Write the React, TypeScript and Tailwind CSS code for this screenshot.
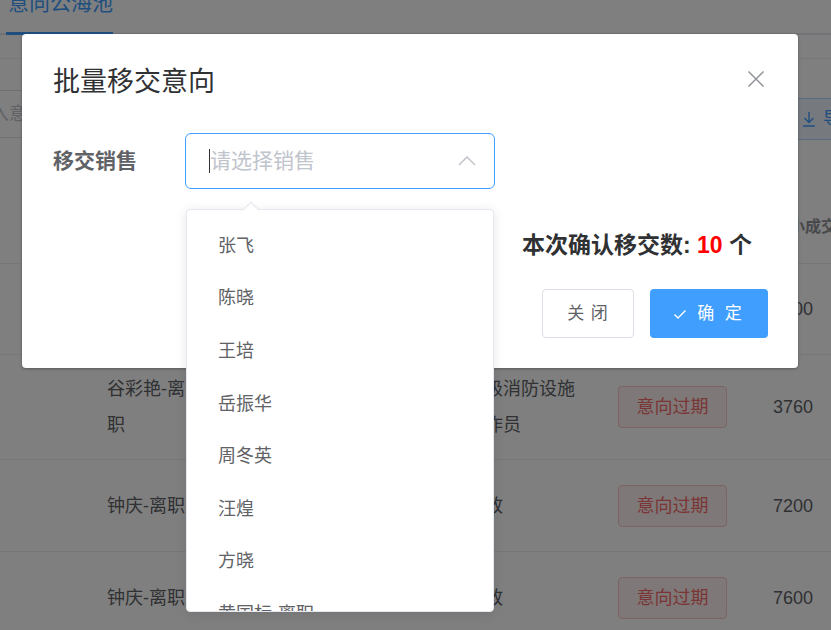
import React from "react";

const salesList = ["张飞", "陈晓", "王培", "岳振华", "周冬英", "汪煌", "方晓", "黄国标-离职"];

const rows = [
    { name: "", job: "", amount: "4800", h: "h-[91px]" },
    { name: "谷彩艳-离职", job: "初级消防设施操作员", amount: "3760", h: "h-[105px]" },
    { name: "钟庆-离职", job: "行政", amount: "7200", h: "h-[92px]" },
    { name: "钟庆-离职", job: "行政", amount: "7600", h: "h-[92px]" },
];

const BackgroundPage = () => (
    <div className="w-full">
        {/* tabs */}
        <div className="h-[35px] flex items-end border-b-2 border-[#e4e7ed] pl-[6px]">
            <div className="mb-[-2px] pl-[2px] pb-[14px] border-b-[3px] border-[#409eff] text-[21px] leading-[30px] text-[#409eff]">
                意向公海池
            </div>
        </div>
        <div className="h-[24px] border-b border-[#ebeef5]" />
        {/* toolbar */}
        <div className="h-[79px] flex items-start pt-[31px]">
            <div className="ml-[-60px] w-[300px] h-[48px] border border-[#dcdfe6] rounded-[4px] flex items-center pl-[14px] text-[18px] text-[#c0c4cc]">
                请输入意向客户
            </div>
            <div className="ml-auto mr-[-61px] mt-[8px] w-[110px] h-[42px] border border-[#b3d8ff] bg-[#ecf5ff] rounded-[4px] flex items-center gap-[7px] pl-[19px] text-[18px] text-[#409eff]">
                <svg width="14" height="16" viewBox="0 0 14 16" fill="none" stroke="currentColor" strokeWidth="1.4">
                    <path d="M7 1v10M2.5 7l4.5 4.5L11.5 7M1 15h12" />
                </svg>
                导出
            </div>
        </div>
        {/* table header */}
        <div className="h-[126px] border-b border-[#ebeef5] grid grid-cols-[773px_1fr] items-end pb-[24px]">
            <div />
            <div className="text-[16px] leading-[24px] text-[#909399] font-semibold whitespace-nowrap">最小成交价</div>
        </div>
        {rows.map((r, i) => (
            <div key={i} className={`${r.h} border-b border-[#ebeef5] grid grid-cols-[107px_360px_151px_155px_1fr] items-center text-[18px] leading-[36px] text-[#606266]`}>
                <div />
                <div className="w-[92px]">{r.name}</div>
                <div className="w-[115px]">{r.job}</div>
                <div>
                    <div className="w-[109px] h-[42px] border border-[#fbc4c4] bg-[#fef0f0] rounded-[4px] flex items-center justify-center text-[#f56c6c]">
                        意向过期
                    </div>
                </div>
                <div>{r.amount}</div>
            </div>
        ))}
    </div>
);

const TransferDialog = () => (
    <div className="absolute left-[22px] top-[34px] w-[776px] h-[334px] bg-white rounded-[4px] shadow-[0_1px_3px_rgba(0,0,0,0.3)] flex flex-col">
        <div className="h-[66px] pt-[30px] pl-[31px] pr-[32px] flex items-center justify-between">
            <div className="text-[27px] leading-[36px] text-[#303133]">批量移交意向</div>
            <svg className="mb-[6px]" width="20" height="20" viewBox="0 0 20 20" fill="none" stroke="#909399" strokeWidth="1.5">
                <path d="M2.5 2.5l15 15M17.5 2.5l-15 15" />
            </svg>
        </div>
        <div className="mt-[33px] pl-[31px] flex items-center">
            <div className="w-[132px] text-[21px] font-semibold text-[#606266]">移交销售</div>
            <div className="w-[310px] h-[56px] border border-[#409eff] rounded-[6px] flex items-center pl-[23px] pr-[18px]">
                <span className="w-[1px] h-[24px] bg-[#303133]" />
                <span className="text-[21px] text-[#c0c4cc]">请选择销售</span>
                <svg className="ml-auto" width="18" height="10" viewBox="0 0 18 10" fill="none" stroke="#c0c4cc" strokeWidth="1.5">
                    <path d="M1 9l8-8 8 8" />
                </svg>
            </div>
        </div>
        <div className="mt-[41px] pr-[46px] flex justify-end">
            <div className="text-[23px] leading-[30px] font-bold text-[#303133]">
                本次确认移交数: <span className="text-[#ff0000]">10</span> 个
            </div>
        </div>
        <div className="mt-[29px] pr-[30px] flex justify-end gap-[16px]">
            <button className="w-[92px] h-[49px] border border-[#dcdfe6] rounded-[4px] bg-white text-[17px] text-[#606266] tracking-[1px]">
                关 闭
            </button>
            <button className="w-[118px] h-[49px] rounded-[4px] bg-[#409eff] text-[17px] text-white flex items-center justify-center gap-[10px] tracking-[3px]">
                <svg width="14" height="14" viewBox="0 0 14 14" fill="none" stroke="white" strokeWidth="1.4">
                    <path d="M1.5 7.5L5 11l7.5-7.5" />
                </svg>
                确 定
            </button>
        </div>
    </div>
);

const SalesDropdown = () => (
    <div className="absolute left-[186px] top-[209px] w-[308px] h-[403px] bg-white border border-[#e4e7ed] rounded-[4px] shadow-[0_2px_12px_rgba(0,0,0,0.1)]">
        <div className="absolute top-[-6px] left-[58px] w-[12px] h-[12px] rotate-45 bg-white border-l border-t border-[#e4e7ed]" />
        <div className="h-full overflow-hidden pt-[10px]">
            {salesList.map((s) => (
                <div key={s} className="h-[52.6px] flex items-center pl-[31px] text-[18px] text-[#606266]">
                    {s}
                </div>
            ))}
        </div>
    </div>
);

export default function App() {
    return (
        <div className="relative w-[831px] h-[630px] overflow-hidden bg-white font-['Liberation_Sans','Noto_Sans_CJK_SC',sans-serif]">
            <BackgroundPage />
            <div className="absolute inset-0 bg-black/50" />
            <TransferDialog />
            <SalesDropdown />
        </div>
    );
}
